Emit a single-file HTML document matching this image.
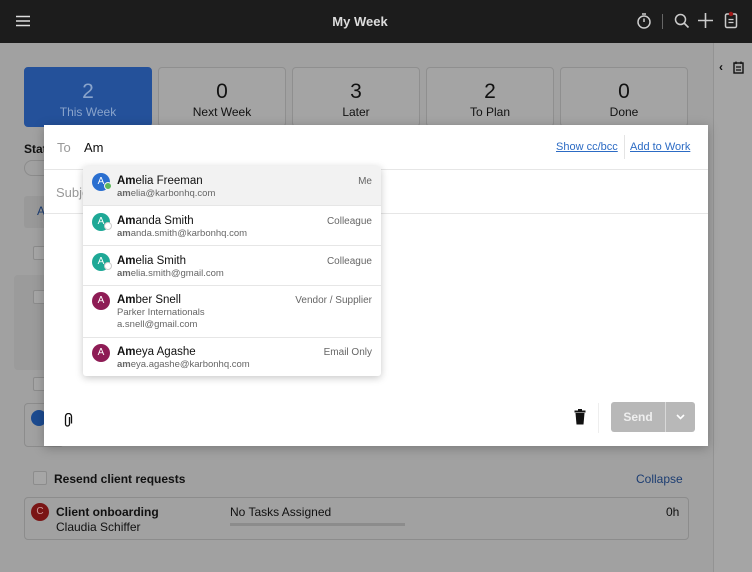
<!DOCTYPE html>
<html><head><meta charset="utf-8"><style>
*{box-sizing:border-box;margin:0;padding:0}
body{width:752px;height:572px;overflow:hidden;background:#a1a1a1;font-family:"Liberation Sans",sans-serif;position:relative;color:#111}
.abs{position:absolute}
.hdr{left:0;top:0;width:752px;height:43px;background:#1c1c1c}
.side{left:713px;top:43px;width:39px;height:529px;background:#a5a5a5;border-left:1px solid #939393}
.tile{top:67px;width:128px;height:60px;background:#a4a4a4;border:1px solid #8f8f8f;border-radius:4px;text-align:center;color:#111}
.tile .n{font-size:21px;margin-top:13px;line-height:22px}
.tile .l{font-size:12px;margin-top:2px}
.cb{width:14px;height:14px;border:1px solid #8c8c8c;border-radius:2px;background:#a6a6a6}
.modal{left:44px;top:125px;width:664px;height:321px;background:#fff;box-shadow:0 2px 10px rgba(0,0,0,.25)}
.dd{left:83px;top:166px;width:298px;height:210px;background:#fff;box-shadow:0 2px 8px rgba(0,0,0,.22);border-radius:3px;overflow:hidden}
.row{position:relative;border-bottom:1px solid #e6e6e6}
.av{position:absolute;left:9px;width:18px;height:18px;border-radius:50%;color:#fff;font-size:10px;text-align:center;line-height:18px}
.dot{position:absolute;left:21px;width:8px;height:8px;border-radius:50%;border:1.5px solid #fff}
.nm{position:absolute;left:34px;font-size:11.5px;color:#111}
.em{position:absolute;left:34px;font-size:9.5px;color:#666}
.tg{position:absolute;right:9px;font-size:10px;color:#666}
</style></head><body>
<div class="abs hdr"></div>
<svg class="abs" style="left:16px;top:15px" width="14" height="12"><path d="M0 1.5H14M0 6H14M0 10.5H14" stroke="#ddd" stroke-width="1.5"/></svg>
<div class="abs" style="left:0;width:720px;top:14px;text-align:center;color:#ddd;font-size:13px;font-weight:bold">My Week</div>
<svg class="abs" style="left:636px;top:12px" width="16" height="17"><circle cx="8" cy="10" r="6" stroke="#ccc" stroke-width="1.5" fill="none"/><path d="M6 2H10M8 10V6.5" stroke="#ccc" stroke-width="1.5"/></svg>
<div class="abs" style="left:662px;top:14px;width:1px;height:15px;background:#666"></div>
<svg class="abs" style="left:674px;top:13px" width="16" height="16"><circle cx="6.5" cy="6.5" r="5" stroke="#ccc" stroke-width="1.5" fill="none"/><path d="M10 10L14.5 14.5" stroke="#ccc" stroke-width="1.6"/></svg>
<svg class="abs" style="left:698px;top:13px" width="15" height="15"><path d="M7.5 0V15M0 7.5H15" stroke="#ccc" stroke-width="1.6"/></svg>
<svg class="abs" style="left:724px;top:11px" width="14" height="18"><rect x="1.5" y="3" width="11" height="13.5" rx="1.5" stroke="#ccc" stroke-width="1.5" fill="none"/><path d="M4.5 8.5H9.5M4.5 11.5H9.5" stroke="#ccc" stroke-width="1.3"/><circle cx="7" cy="3" r="2.2" fill="#a01a1a"/></svg>
<div class="abs side"></div>
<div class="abs" style="left:719px;top:60px;font-size:12px;font-weight:bold;color:#111">‹</div>
<svg class="abs" style="left:733px;top:61px" width="11" height="13"><rect x="1" y="2" width="9" height="10" stroke="#111" stroke-width="1.4" fill="none"/><path d="M3 0.5V3M8 0.5V3M3 6H8M3 9H8" stroke="#111" stroke-width="1.2"/></svg>
<div class="abs tile" style="left:24px;background:#24519a;border-color:#24519a;color:#8aa4cb"><div class="n">2</div><div class="l">This Week</div></div>
<div class="abs tile" style="left:158px"><div class="n">0</div><div class="l">Next Week</div></div>
<div class="abs tile" style="left:292px"><div class="n">3</div><div class="l">Later</div></div>
<div class="abs tile" style="left:426px"><div class="n">2</div><div class="l">To Plan</div></div>
<div class="abs tile" style="left:560px"><div class="n">0</div><div class="l">Done</div></div>
<div class="abs" style="left:24px;top:142px;font-size:12px;font-weight:bold">Stat</div>
<div class="abs" style="left:24px;top:160px;width:30px;height:16px;border:1px solid #8c8c8c;border-radius:8px"></div>
<div class="abs" style="left:24px;top:196px;width:30px;height:32px;background:#999;border-radius:3px"></div>
<div class="abs" style="left:37px;top:204px;font-size:12px;color:#1c3d72">A</div>
<div class="abs cb" style="left:33px;top:246px"></div>
<div class="abs" style="left:14px;top:275px;width:40px;height:95px;background:#9b9b9b;border-radius:4px"></div>
<div class="abs cb" style="left:33px;top:290px"></div>
<div class="abs cb" style="left:33px;top:377px"></div>
<div class="abs" style="left:24px;top:403px;width:40px;height:44px;border:1px solid #8c8c8c;border-radius:4px"></div>
<div class="abs" style="left:31px;top:410px;width:16px;height:16px;border-radius:50%;background:#1c4b90"></div>

<div class="abs cb" style="left:33px;top:471px"></div>
<div class="abs" style="left:54px;top:472px;font-size:12px;font-weight:bold">Resend client requests</div>
<div class="abs" style="left:636px;top:472px;font-size:12px;color:#1c3d72">Collapse</div>
<div class="abs" style="left:24px;top:497px;width:665px;height:43px;border:1px solid #8c8c8c;border-radius:4px"></div>
<div class="abs" style="left:31px;top:503px;width:18px;height:18px;border-radius:50%;background:#7a1515;color:#c99;font-size:10px;text-align:center;line-height:18px">C</div>
<div class="abs" style="left:56px;top:505px;font-size:12px;font-weight:bold">Client onboarding</div>
<div class="abs" style="left:56px;top:520px;font-size:12px">Claudia Schiffer</div>
<div class="abs" style="left:230px;top:505px;font-size:12px">No Tasks Assigned</div>
<div class="abs" style="left:230px;top:523px;width:175px;height:3px;background:#8c8c8c"></div>
<div class="abs" style="left:666px;top:505px;font-size:12px">0h</div>

<div class="abs modal">
 <div class="abs" style="left:13px;top:15px;font-size:13px;color:#999">To</div>
 <div class="abs" style="left:40px;top:15px;font-size:13px;color:#111">Am</div>
 <div class="abs" style="left:512px;top:16px;font-size:11px;color:#2c6bc4;text-decoration:underline">Show cc/bcc</div>
 <div class="abs" style="left:580px;top:10px;width:1px;height:24px;background:#e4e4e4"></div>
 <div class="abs" style="left:586px;top:16px;font-size:11px;color:#2c6bc4;text-decoration:underline">Add to Work</div>
 <div class="abs" style="left:0;top:44px;width:664px;height:1px;background:#e6e6e6"></div>
 <div class="abs" style="left:12px;top:60px;font-size:13px;color:#999">Subject</div>
 <div class="abs" style="left:0;top:88px;width:664px;height:1px;background:#e6e6e6"></div>
 <svg class="abs" style="left:19px;top:288px" width="10" height="15"><path d="M6.5 4V11A2 2 0 0 1 2.5 11V3.5A3 3 0 0 1 8.5 3.5V10.5" stroke="#111" stroke-width="1.3" fill="none"/></svg>
 <svg class="abs" style="left:530px;top:284px" width="12" height="16"><path d="M0.5 2.5H11.5" stroke="#111" stroke-width="2"/><rect x="4" y="0" width="4" height="2" fill="#111"/><path d="M1.5 4H10.5L9.5 15.5H2.5Z" fill="#111"/></svg>
 <div class="abs" style="left:554px;top:278px;width:1px;height:30px;background:#eee"></div>
 <div class="abs" style="left:567px;top:277px;width:84px;height:30px;background:#b8b8b8;border-radius:3px"></div>
 <div class="abs" style="left:567px;top:285px;width:54px;text-align:center;font-size:12px;color:#eee;font-weight:bold">Send</div>
 <div class="abs" style="left:621px;top:277px;width:1px;height:30px;background:#d8d8d8"></div>
 <svg class="abs" style="left:632px;top:289px" width="9" height="6"><path d="M1 1L4.5 4.5L8 1" stroke="#fff" stroke-width="1.6" fill="none"/></svg>
</div>

<div class="abs dd">
 <div class="row" style="height:40px;background:#f2f2f2">
  <div class="av" style="top:7px;background:#2a6fd0">A</div><div class="dot" style="top:16px;background:#5cb85c;border-color:#f2f2f2"></div>
  <div class="nm" style="top:9px"><b>Am</b>elia Freeman</div><div class="em" style="top:22px"><b>am</b>elia@karbonhq.com</div><div class="tg" style="top:10px">Me</div>
 </div>
 <div class="row" style="height:40px">
  <div class="av" style="top:7px;background:#1ea896">A</div><div class="dot" style="top:16px;background:#fff;border-color:#ccc"></div>
  <div class="nm" style="top:9px"><b>Am</b>anda Smith</div><div class="em" style="top:22px"><b>am</b>anda.smith@karbonhq.com</div><div class="tg" style="top:10px">Colleague</div>
 </div>
 <div class="row" style="height:40px">
  <div class="av" style="top:7px;background:#1ea896">A</div><div class="dot" style="top:16px;background:#fff;border-color:#ccc"></div>
  <div class="nm" style="top:9px"><b>Am</b>elia Smith</div><div class="em" style="top:22px"><b>am</b>elia.smith@gmail.com</div><div class="tg" style="top:10px">Colleague</div>
 </div>
 <div class="row" style="height:52px">
  <div class="av" style="top:6px;background:#8e1c55">A</div>
  <div class="nm" style="top:8px"><b>Am</b>ber Snell</div><div class="em" style="top:21px">Parker Internationals</div><div class="em" style="top:33px">a.snell@gmail.com</div><div class="tg" style="top:9px">Vendor / Supplier</div>
 </div>
 <div class="row" style="height:38px;border:none">
  <div class="av" style="top:6px;background:#8e1c55">A</div>
  <div class="nm" style="top:8px"><b>Am</b>eya Agashe</div><div class="em" style="top:21px"><b>am</b>eya.agashe@karbonhq.com</div><div class="tg" style="top:9px">Email Only</div>
 </div>
</div>
</body></html>
